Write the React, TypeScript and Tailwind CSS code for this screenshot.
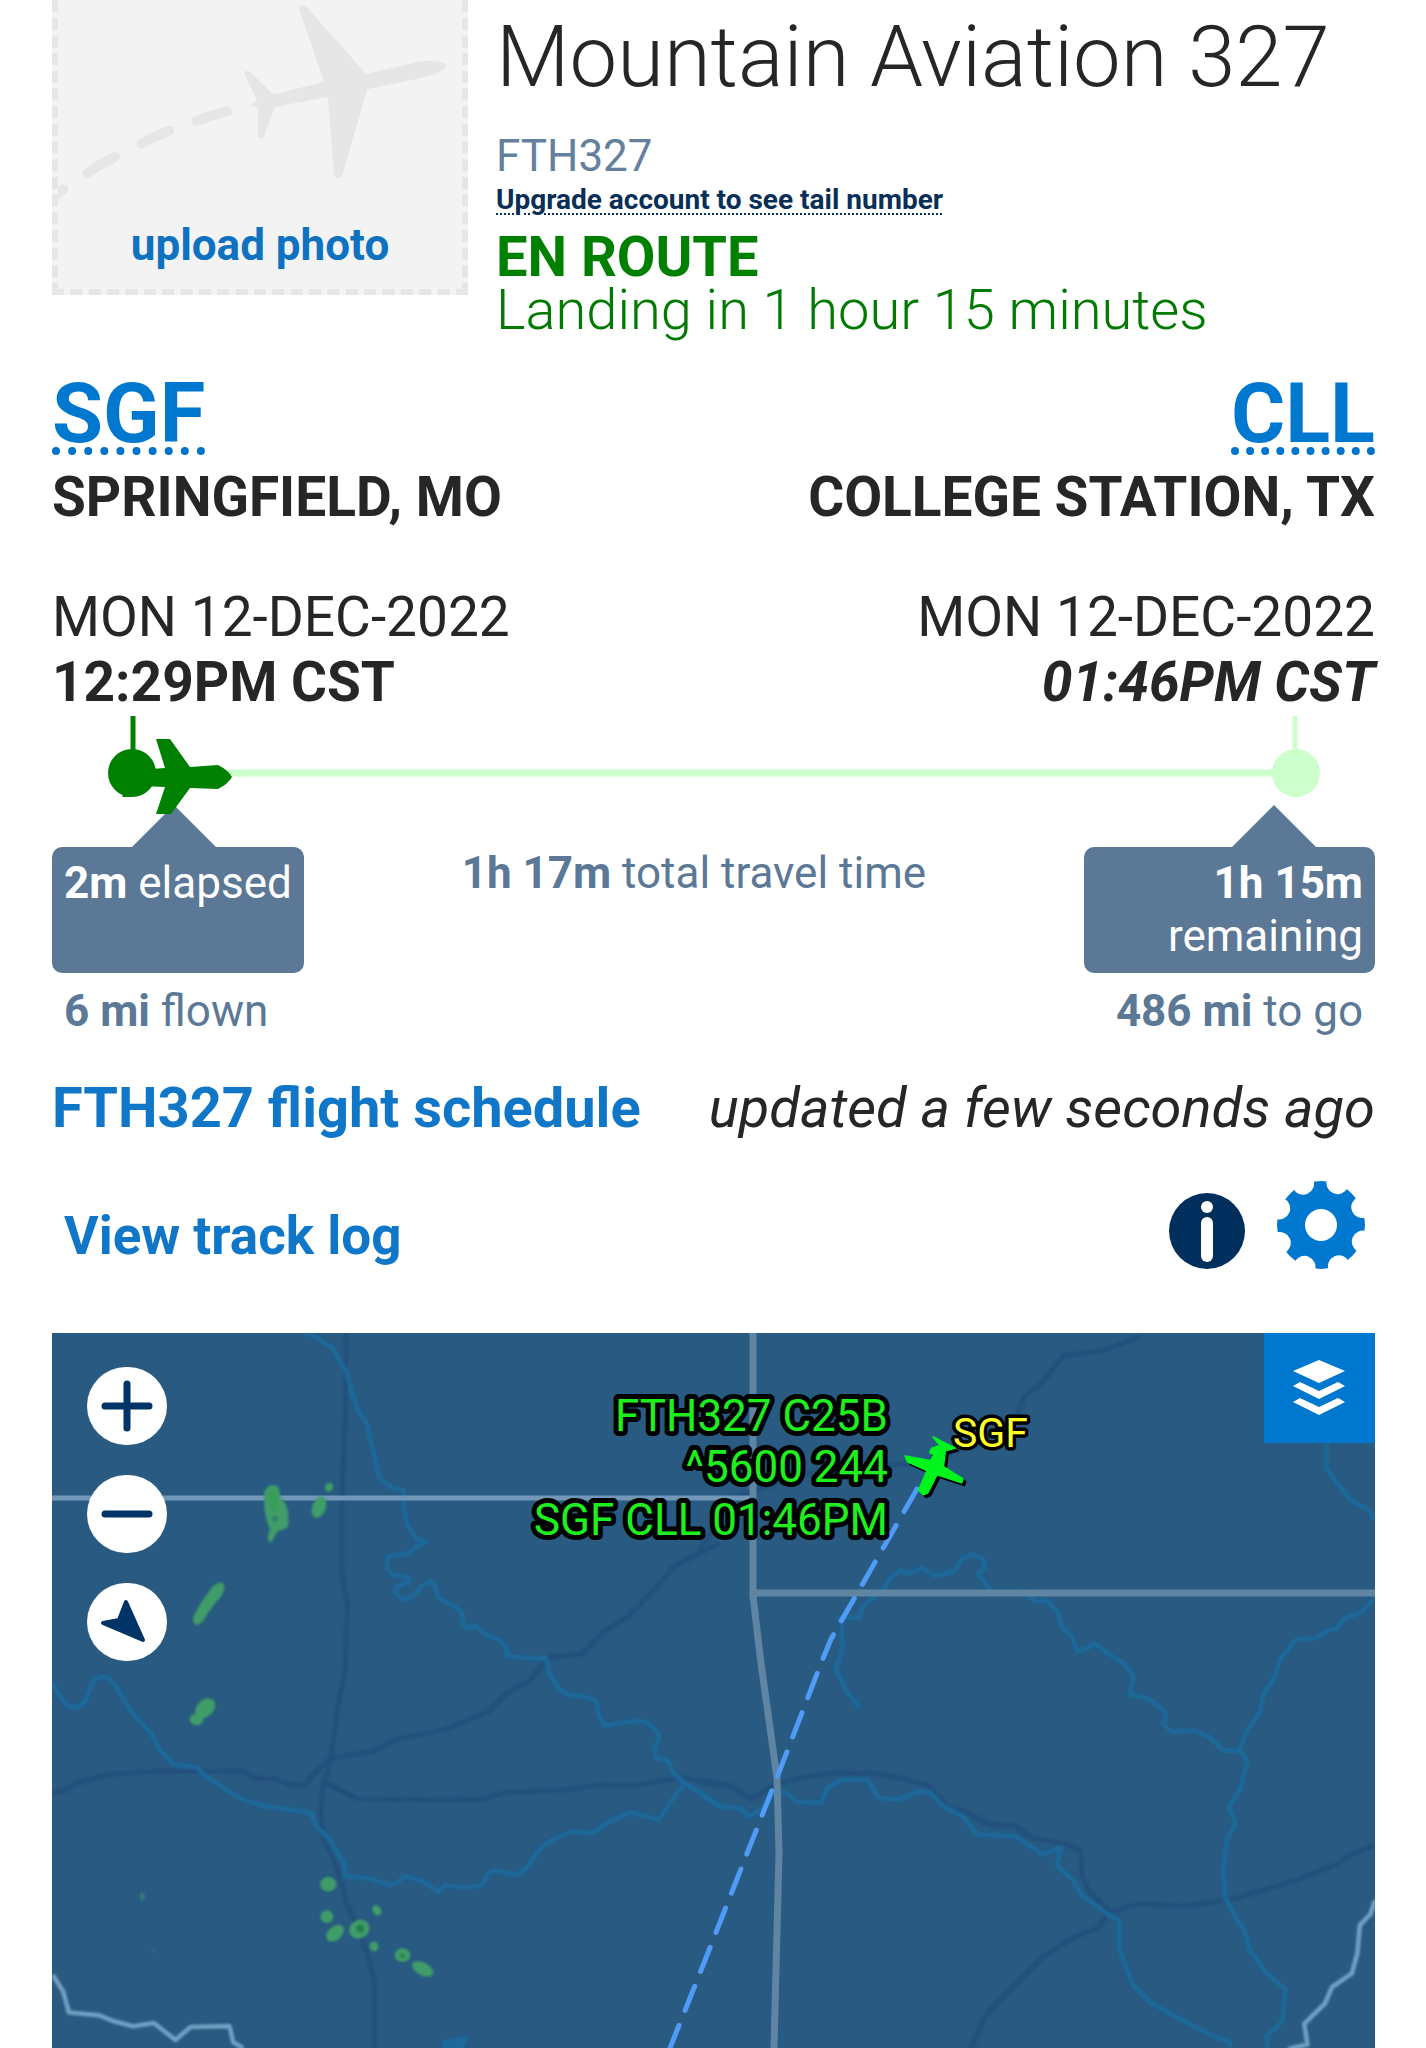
import React from 'react';

interface Stop {
  code: string;
  city: string;
  date: string;
  time: string;
}

const ORIGIN: Stop = {
  code: 'SGF',
  city: 'SPRINGFIELD, MO',
  date: 'MON 12-DEC-2022',
  time: '12:29PM CST'
};

const DESTINATION: Stop = {
  code: 'CLL',
  city: 'COLLEGE STATION, TX',
  date: 'MON 12-DEC-2022',
  time: '01:46PM CST'
};

const GEAR_NOTCHES = [22.5, 67.5, 112.5, 157.5, 202.5, 247.5, 292.5, 337.5];

// Paths are in tile units, each tile is scaled into the map by its group
const WEST_RIVERS = [
  'M665 8 L690 15 L705 28 L725 38 L738 65 L755 92 L768 140 L780 175 L800 205 L808 245 L818 285 L826 320 L850 343 L880 350 L881 400 L890 430 L908 455 L928 462 L905 475 L885 490 L862 490 L845 496 L843 520 L855 535 L890 540 L893 550 L865 560 L860 572 L875 588 L898 583 L920 560 L938 548 L948 560 L955 585 L985 600 L1008 618 L1008 640 L1018 652 L1035 645 L1060 665 L1090 678 L1103 692 L1104 712 L1145 716 L1190 717 L1198 752 L1215 780 L1240 797 L1270 800 L1300 810 L1304 840 L1318 864 L1350 858 L1398 853 L1420 864 L1437 888 L1425 915 L1430 935 L1455 940 L1470 970 L1492 990 L1530 1012 L1568 1040',
  'M115 770 Q135 815 155 823 Q182 830 193 792 Q204 756 222 757 Q242 756 260 790 L285 832 L330 883 L350 920 L378 948 L430 956 L450 975 L500 1008 L530 1026 L580 1040 L630 1047 L678 1054 L690 1085 L715 1110 L735 1140 L750 1165 L752 1192 L800 1197 L850 1212 L868 1205 L880 1192 L920 1203 L955 1228 L968 1212 L1018 1218 L1052 1211 L1062 1187 L1078 1180 L1128 1190 L1150 1170 L1180 1130 L1205 1112 L1245 1095 L1290 1098 L1335 1070 L1375 1053 L1435 1070 L1465 1025 L1492 990'
];

const WEST_ROADS = [
  'M755 8 L752 200 L745 360 L745 530 L757 600 L752 740 L738 810 L728 880 L720 940 L705 990 L698 1050 L705 1110 L735 1175 L755 1250 L785 1320 L800 1360 L815 1420 L815 1568',
  'M115 1010 L140 1006 L165 990 L240 970 L350 963 L530 964 L560 980 L600 980 L635 994 L665 993 L680 973 L720 935 L815 920 L860 895 L970 872 L1060 835 L1115 785 L1155 765 L1195 715 L1268 707 L1320 655 L1370 625 L1440 550 L1470 515 L1568 465',
  'M703 985 L780 1024 L1050 1025 L1100 1010 L1240 1003 L1300 994 L1400 993 L1440 984 L1490 978 L1568 994'
];

const EAST_RIVERS = [
  'M345 827 L315 785 L293 740 L308 700 L306 640 L300 628 L345 628 L350 605 L400 562 L412 540 L432 525 L450 532 L480 520 L510 538 L550 525 L565 500 L585 490 L612 500 L615 520 L600 532 L615 550 L628 572 L700 572 L725 592 L750 590 L775 620 L780 645 L803 670 L815 702 L838 695 L850 684 L880 705 L918 730 L936 755 L928 795 L970 805 L1008 835 L1000 860 L1020 878 L1065 874 L1100 888 L1130 918 L1165 918 L1182 940 L1168 1000 L1142 1042 L1158 1080 L1138 1110 L1130 1180 L1135 1240 L1155 1280 L1175 1310 L1188 1355 L1220 1400 L1265 1440 L1258 1510 L1225 1540 L1225 1568',
  'M1165 918 L1180 875 L1210 835 L1215 800 L1242 755 L1252 720 L1288 675 L1330 673 L1360 655 L1375 652 L1390 632 L1430 615 L1458 585',
  'M1353 245 L1353 302 L1385 345 L1405 372 L1440 390 L1458 415',
  'M0 1015 L45 1040 L90 1045 L105 1062 L135 1045 L165 1010 L185 1010 L210 1030 L262 1033 L275 998 L310 982 L362 982 L385 1022 L430 1025 L470 1008 L495 1008 L525 1040 L565 1060 L600 1102 L680 1105 L740 1145 L780 1130 L770 1170 L805 1200 L825 1235 L880 1275 L905 1290 L905 1350 L935 1430 L975 1470 L1035 1503 L1100 1538 L1145 1555 L1145 1568'
];

const EAST_ROADS = [
  'M950 15 L870 45 L785 57 L735 118 L700 145 L685 185 L660 210 L600 245 L500 285 L400 297 L220 315 L70 370 L0 480',
  'M0 984 L65 995 L110 1025 L165 990 L235 975 L290 967 L380 968 L490 992 L535 1040 L580 1055 L625 1080 L680 1082 L715 1108 L780 1120 L822 1135 L825 1190 L840 1225 L885 1270 L950 1253 L1050 1258 L1160 1240 L1290 1200 L1380 1165 L1395 1150 L1458 1125',
  'M885 1270 L860 1305 L800 1330 L740 1370 L660 1450 L615 1500 L585 1568'
];

const AIRCRAFT =
  'M482 360 L472 350 L490 307 L448 288 L443 275 L498 285 L505 272 L496 268 L500 258 L518 252 L503 233 L530 247 L552 258 L530 264 L526 298 L568 325 L565 334 L512 316 L492 356 Z';

interface Echo {
  x: number;
  y: number;
  rx: number;
  ry: number;
  turn: number;
}

const ECHOES: Echo[] = [
  { x: 695, y: 387, rx: 15, ry: 24, turn: 20 },
  { x: 717, y: 343, rx: 9, ry: 10, turn: 20 },
  { x: 470, y: 574, rx: 14, ry: 26, turn: 35 },
  { x: 453, y: 596, rx: 13, ry: 52, turn: 35 },
  { x: 437, y: 622, rx: 12, ry: 24, turn: 30 },
  { x: 447, y: 826, rx: 18, ry: 25, turn: 45 },
  { x: 428, y: 850, rx: 15, ry: 13, turn: 0 },
  { x: 715, y: 1210, rx: 18, ry: 16, turn: 0 },
  { x: 712, y: 1281, rx: 14, ry: 14, turn: 0 },
  { x: 730, y: 1317, rx: 22, ry: 15, turn: -40 },
  { x: 783, y: 1308, rx: 23, ry: 20, turn: -30 },
  { x: 821, y: 1267, rx: 9, ry: 12, turn: -30 },
  { x: 815, y: 1346, rx: 10, ry: 11, turn: 0 },
  { x: 877, y: 1365, rx: 17, ry: 15, turn: 0 },
  { x: 921, y: 1395, rx: 25, ry: 14, turn: 28 }
];

const PhotoUpload: React.FC = () => (
  <button className="relative flex h-[295px] w-[416px] shrink-0 items-end justify-center border-6 border-t-0 border-dashed border-[#e6e6e6] bg-[#f3f3f3] pb-[18px] text-[44px] leading-[52px] font-bold text-[#0f72c0]">
    <svg viewBox="174 0 1212 867" className="absolute inset-0 h-full w-full" fill="#e6e6e6" aria-hidden="true">
      <path d="M896 22 Q903 10 918 18 L1098 222 L1262 184 Q1318 178 1341 196 Q1328 218 1290 228 L1102 268 L1026 528 Q1014 540 1002 528 L984 291 L826 320 L791 410 Q782 418 774 410 L774 322 L752 317 L771 300 L733 222 Q736 208 748 214 L820 283 L972 246 Z" />
      <g fill="none" stroke="#e6e6e6" strokeWidth="30" strokeLinecap="round">
        <path d="M590 363 Q635 344 682 334" />
        <path d="M424 431 Q464 408 508 392" />
        <path d="M262 520 Q300 492 345 470" />
        <path d="M160 590 L190 568" />
      </g>
    </svg>
    <span className="relative">upload photo</span>
  </button>
);

const StopInfo: React.FC<{ stop: Stop; estimated?: boolean; className?: string }> = ({ stop, estimated, className }) => (
  <div className={className}>
    <a
      href={`#${stop.code}`}
      className="inline-block border-b-8 border-dotted border-[#0074cc] align-top text-[83px] leading-[66px] font-bold text-[#0078d0]"
    >
      {stop.code}
    </a>
    <p className="mt-2.5 text-[55px] leading-[64px] font-bold">{stop.city}</p>
    <p className="mt-14 text-[55px] leading-[64px]">{stop.date}</p>
    <p className={`text-[55px] leading-[66px] font-bold ${estimated ? 'italic' : ''}`}>{stop.time}</p>
  </div>
);

const Timeline: React.FC = () => (
  <svg viewBox="0 0 1323 89" className="relative z-10 mt-px block w-full overflow-visible" role="img" aria-label="Flight progress">
    <path d="M80 57 H1244" stroke="#ccffcc" strokeWidth="7" />
    <path d="M1243 0 V40" stroke="#ccffcc" strokeWidth="5" />
    <circle cx="1244" cy="57" r="24" fill="#ccffcc" />
    <path d="M81 0 V40" stroke="#008000" strokeWidth="5" />
    <circle cx="80" cy="57" r="24" fill="#008000" />
    <path
      d="M180 61 Q176 54 166 49 L138 51 L118 23 H104 L113 52 L84 54 L70 81 H80 L90 70 L113 71 L104 98 H119 L138 72 L166 73 Q176 68 180 61 Z"
      fill="#008000"
    />
  </svg>
);

const Pointer: React.FC<{ className?: string }> = ({ className }) => (
  <svg viewBox="0 0 84 42" className={`block h-[42px] w-[84px] ${className}`} fill="#5b7896" aria-hidden="true">
    <path d="M42 0 L84 42 H0 Z" />
  </svg>
);

const GearIcon: React.FC = () => (
  <svg viewBox="-44 -44 88 88" className="block h-[88px] w-[88px]" aria-hidden="true">
    <circle r="44" fill="#0078d0" />
    <g fill="#ffffff">
      {GEAR_NOTCHES.map((angle) => (
        <circle key={angle} cx="45" r="11" transform={`rotate(${angle - 1})`} />
      ))}
      <circle r="16" />
    </g>
  </svg>
);

const InfoIcon: React.FC = () => (
  <svg viewBox="0 0 76 76" className="block h-[76px] w-[76px]" aria-hidden="true">
    <circle cx="38" cy="38" r="38" fill="#002f5d" />
    <circle cx="38" cy="14" r="6" fill="#ffffff" />
    <rect x="32" y="24" width="12" height="45" rx="6" fill="#ffffff" />
  </svg>
);

const MapControl: React.FC<{ label: string; children: React.ReactNode }> = ({ label, children }) => (
  <button aria-label={label} className="flex h-[78px] w-20 items-center justify-center rounded-full bg-white">
    <svg viewBox="-40 -39 80 78" className="h-full w-full" stroke="#003366" strokeWidth="7" strokeLinecap="round" strokeLinejoin="round" fill="none">
      {children}
    </svg>
  </button>
);

const FlightMap: React.FC = () => (
  <section className="relative mt-16 overflow-hidden bg-[#285a82]" aria-label="Flight map">
    <svg viewBox="0 0 1323 715" className="block w-full">
      <defs>
        <filter id="soften">
          <feGaussianBlur stdDeviation="2" />
        </filter>
      </defs>

      {/* Roads and rivers */}
      <g transform="translate(-52 -3) scale(0.459 0.458)" fill="none" strokeWidth="10" strokeLinejoin="round" filter="url(#soften)">
        {WEST_ROADS.map((d) => <path key={d} d={d} stroke="#22507c" />)}
        {WEST_RIVERS.map((d) => <path key={d} d={d} stroke="#1a699b" />)}
        <path d="M965 1555 L985 1552 L1015 1545 L1005 1568 H972 Z" fill="#1a699b" stroke="#1a699b" />
      </g>
      <g transform="translate(648 -3) scale(0.463 0.458)" fill="none" strokeWidth="10" strokeLinejoin="round" filter="url(#soften)">
        {EAST_ROADS.map((d) => <path key={d} d={d} stroke="#22507c" />)}
        {EAST_RIVERS.map((d) => <path key={d} d={d} stroke="#1a699b" />)}
      </g>

      {/* State lines */}
      <g fill="none" stroke="#5f85a3" strokeWidth="7" strokeLinejoin="round">
        <path d="M0 165 H701" stroke="#7297b9" strokeWidth="5" />
        <path d="M701 0 V263 L709 330 L725 445 L727 520 L722 715" />
        <path d="M701 260 H1323" />
      </g>
      <g transform="translate(-52 -3) scale(0.459 0.458)" fill="none" stroke="#6fa0c3" strokeWidth="10" strokeLinejoin="round" filter="url(#soften)">
        <path d="M115 1408 L138 1445 L150 1490 L215 1496 L250 1510 L290 1520 L335 1513 L382 1550 L415 1522 L500 1520 L508 1555 L530 1568" />
      </g>
      <g transform="translate(648 -3) scale(0.463 0.458)" fill="none" stroke="#6fa0c3" strokeWidth="10" strokeLinejoin="round" filter="url(#soften)">
        <path d="M1458 1245 L1448 1275 L1425 1300 L1420 1360 L1408 1405 L1365 1435 L1350 1470 L1305 1515 L1312 1560 L1270 1570" />
      </g>

      {/* Weather radar */}
      <g transform="translate(-52 -3) scale(0.459 0.458)" fill="#419c67" filter="url(#soften)">
        <path d="M576 352 Q590 330 607 343 L612 368 Q632 380 628 428 Q616 440 607 437 L590 465 Q578 460 588 435 Q572 400 576 352 Z" />
        <path d="M592 350 L598 392" stroke="#359f56" strokeWidth="16" />
        <circle cx="599" cy="412" r="6" fill="#2d7a68" />
        {ECHOES.map(({ x, y, rx, ry, turn }) => (
          <ellipse key={`${x}-${y}`} cx={x} cy={y} rx={rx} ry={ry} transform={`rotate(${turn} ${x} ${y})`} />
        ))}
        <circle cx="785" cy="1307" r="9" fill="#22804a" />
        <circle cx="877" cy="1366" r="6" fill="#2c8a52" />
        <ellipse cx="310" cy="1237" rx="5" ry="10" fill="#347c78" />
        <circle cx="333" cy="1356" r="5" fill="#2f6f7c" />
      </g>

      {/* Planned route */}
      <path
        d="M865 156 L779 306 L770 328 L724 447 L648 640 L618 715"
        fill="none"
        stroke="#4f9bf5"
        strokeWidth="5"
        strokeLinecap="round"
        strokeDasharray="26 16"
      />

      {/* Aircraft */}
      <g transform="translate(648 -3) scale(0.463 0.458)" strokeLinejoin="round" strokeWidth="3">
        <path d={AIRCRAFT} fill="#000000" stroke="#000000" transform="translate(6 6)" />
        <path d={AIRCRAFT} fill="#00f51c" stroke="#00f51c" />
      </g>

      {/* Labels */}
      <g fontFamily="Roboto, sans-serif" stroke="#000000" strokeLinejoin="round" paintOrder="stroke">
        <g fontSize="44" textAnchor="end" fill="#1ef01e" strokeWidth="10">
          <text x="836" y="98">FTH327 C25B</text>
          <text x="836" y="149">^5600 244</text>
          <text x="836" y="202">SGF CLL 01:46PM</text>
        </g>
        <text x="901" y="114" fontSize="41" fill="#ffff28" strokeWidth="7">SGF</text>
      </g>
    </svg>

    <div className="absolute top-[34px] left-[35px] flex flex-col gap-[30px]">
      <MapControl label="Zoom in">
        <path d="M-22 0 H22 M0 -22 V22" />
      </MapControl>
      <MapControl label="Zoom out">
        <path d="M-22 0 H22" />
      </MapControl>
      <MapControl label="Recenter">
        <path d="M-1 -20 L16 18 L-24 1 L-8 -2 Z" fill="#003366" strokeWidth="4" />
      </MapControl>
    </div>

    <button aria-label="Map layers" className="absolute top-0 right-0 h-[110px] w-[111px] bg-[#0078d0]">
      <svg viewBox="0 0 111 110" className="h-full w-full" fill="#ffffff">
        <path d="M55 27 L81 38 L55 50 L29 38 Z" />
        <path d="M36 49 L55 58 L74 49 L81 53 L55 66 L29 53 Z" />
        <path d="M36 65 L55 74 L74 65 L81 69 L55 82 L29 69 Z" />
      </svg>
    </button>
  </section>
);

const App: React.FC = () => {
  return (
    <main className="bg-white pr-[51px] pl-[52px] font-['Roboto',sans-serif] text-[#262626]">
      <header className="flex items-start gap-7">
        <PhotoUpload />
        <div>
          <h1 className="text-[85px] leading-[114px] font-light">Mountain Aviation 327</h1>
          <p className="mt-3.5 text-[44px] leading-[56px] text-[#64809c]">FTH327</p>
          <a
            href="#upgrade"
            className="block w-fit text-[28px] leading-8 font-bold text-[#0a2f57] underline decoration-dotted decoration-2 underline-offset-4"
          >
            Upgrade account to see tail number
          </a>
          <p className="mt-[15px] text-[56px] leading-[53px] font-bold text-[#008000]">EN ROUTE</p>
          <p className="text-[56px] leading-[53px] font-light text-[#007a00]">Landing in 1 hour 15 minutes</p>
        </div>
      </header>

      <section className="mt-11 flex justify-between">
        <StopInfo stop={ORIGIN} />
        <StopInfo stop={DESTINATION} estimated className="text-right" />
      </section>

      <Timeline />

      {/* Elapsed and remaining */}
      <section className="text-[44px] leading-[53px] text-[#5b7896]">
        <div className="flex">
          <div className="flex flex-col">
            <Pointer className="ml-20" />
            <p className="flex-1 rounded-[10px] bg-[#5b7896] px-3 py-2.5 text-white"><b>2m</b> elapsed</p>
          </div>
          <p className="mt-[42px] flex-1 text-center"><b>1h 17m</b> total travel time</p>
          <div className="flex w-[22%] flex-col items-end">
            <Pointer className="mr-[59px]" />
            <p className="w-full rounded-[10px] bg-[#5b7896] px-3 py-2.5 text-right text-white"><b>1h 15m</b> remaining</p>
          </div>
        </div>
        <div className="mt-3 flex justify-between px-3">
          <p><b>6 mi</b> flown</p>
          <p><b>486 mi</b> to go</p>
        </div>
      </section>

      <div className="mt-[38px] flex justify-between text-[56px] leading-[65px]">
        <a href="#schedule" className="font-bold text-[#0f76c8]">FTH327 flight schedule</a>
        <p className="italic">updated a few seconds ago</p>
      </div>

      <div className="mt-10 flex items-end justify-between pr-2.5 pl-3">
        <a href="#tracklog" className="text-[53px] leading-[65px] font-bold text-[#0f76c8]">View track log</a>
        <div className="flex items-end gap-8">
          <button aria-label="Flight information"><InfoIcon /></button>
          <button aria-label="Settings"><GearIcon /></button>
        </div>
      </div>

      <FlightMap />
    </main>
  );
};

export default App;
